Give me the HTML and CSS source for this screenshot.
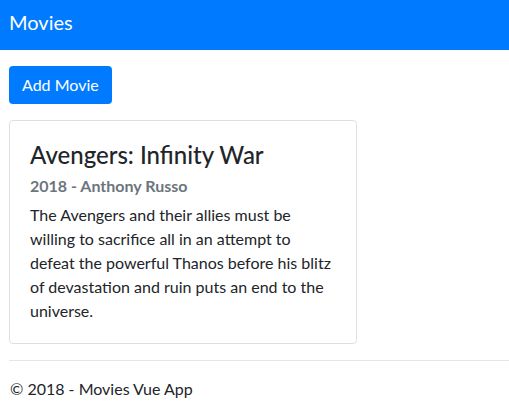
FILE: index.html
```html
<!DOCTYPE html>
<html lang="en">
<head>
<meta charset="utf-8">
<title>Movies</title>
<link rel="stylesheet" href="styles.css">
</head>
<body>
<nav class="navbar">
  <span class="brand">Movies</span>
</nav>
<main class="content">
  <button class="btn" type="button">Add Movie</button>
  <div class="card">
    <div class="card-body">
      <h4 class="card-title">Avengers: Infinity War</h4>
      <h6 class="card-subtitle">2018 - Anthony Russo</h6>
      <p class="card-text">The Avengers and their allies must be willing to sacrifice all in an attempt to defeat the powerful Thanos before his blitz of devastation and ruin puts an end to the universe.</p>
    </div>
  </div>
  <hr class="divider">
  <footer class="footer">© 2018 - Movies Vue App</footer>
</main>
</body>
</html>
```
FILE: styles.css
```css
* { box-sizing: border-box; }
html, body { margin: 0; padding: 0; }
body {
  font-family: "Lato", "Liberation Sans", sans-serif;
  font-size: 16px;
  line-height: 24px;
  color: #212529;
  background: #fff;
}
.navbar {
  height: 50px;
  background: #007bff;
  padding: 10px 9px 0;
}
.brand {
  display: block;
  color: #fff;
  font-size: 20px;
  line-height: 24px;
}
.content {
  padding: 16px 0 0 9px;
}
.btn {
  display: block;
  font-family: inherit;
  font-size: 16px;
  line-height: 24px;
  padding: 7px 13px 7px;
  color: #fff;
  background: #007bff;
  border: 0;
  border-radius: 4px;
  cursor: pointer;
}
.card {
  width: 348px;
  margin-top: 16px;
  border: 1px solid rgba(0, 0, 0, 0.125);
  border-radius: 4px;
}
.card-body {
  padding: 20px;
}
.card-title {
  margin: 0 0 12px;
  font-size: 24px;
  font-weight: 500;
  line-height: 1.2;
}
.card-subtitle {
  margin: -6px 0 8px;
  font-size: 16px;
  font-weight: 700;
  line-height: 1.2;
  color: #6c757d;
}
.card-text {
  margin: 0;
}
.divider {
  margin: 16px 0;
  border: 0;
  border-top: 1px solid rgba(0, 0, 0, 0.1);
}
.footer {
  padding-left: 1px;
}
```
